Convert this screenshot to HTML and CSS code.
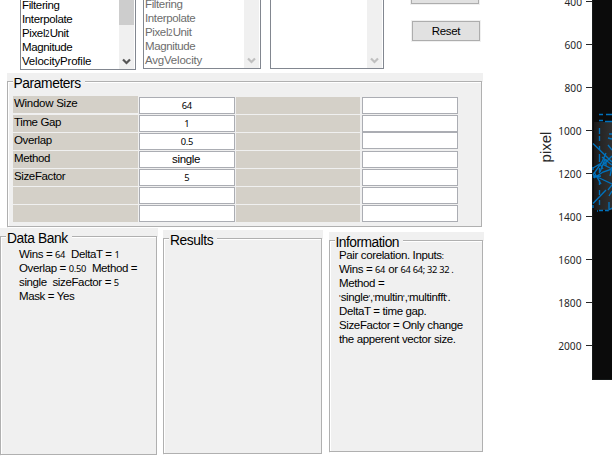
FILE: index.html
```html
<!DOCTYPE html>
<html lang="en">
<head>
<meta charset="utf-8">
<title>Vector analysis</title>
<link rel="stylesheet" href="styles.css">
</head>
<body>
<div class="app">
  <main class="controls">
    <section class="lists">
      <div class="listbox first">
        <ul><li>Filtering</li><li>Interpolate</li><li>Pixel<i class="small">2</i>Unit</li><li>Magnitude</li><li class="wide">VelocityProfile</li></ul>
        <div class="scroll"><div class="thumb"></div><svg width="15" height="12" viewBox="0 0 15 12"><path d="M4 2.5 7.5 6 11 2.5"/></svg></div>
      </div>
      <div class="listbox second off">
        <ul><li>Filtering</li><li>Interpolate</li><li>Pixel<i class="small">2</i>Unit</li><li>Magnitude</li><li class="wide">AvgVelocity</li></ul>
        <div class="scroll"><svg width="15" height="12" viewBox="0 0 15 12"><path d="M4 2.5 7.5 6 11 2.5"/></svg></div>
      </div>
      <div class="listbox third off">
        <div class="scroll"><svg width="15" height="12" viewBox="0 0 15 12"><path d="M4 2.5 7.5 6 11 2.5"/></svg></div>
      </div>
      <div class="buttons"><button class="cut"></button><button>Reset</button></div>
    </section>

    <section class="panel params">
      <h2>Parameters</h2>
      <div class="frame">
        <div class="col labels">
          <span>Window Size</span><span>Time Gap</span><span>Overlap</span><span>Method</span><span>SizeFactor</span><span></span><span></span>
        </div>
        <div class="col fields">
          <span><i>64</i></span><span><i>1</i></span><span><i>0.5</i></span><span class="word">single</span><span><i>5</i></span><span></span><span></span>
        </div>
        <div class="col blanks"><span></span><span></span><span></span><span></span><span></span><span></span><span></span></div>
        <div class="col fields extra"><span></span><span></span><span class="raised"></span><span></span><span></span><span></span><span></span></div>
      </div>
    </section>

    <section class="bottom">
      <div class="panel bank">
        <h2>Data Bank</h2>
        <div class="frame">
          <p>Wins = <i>64</i>&nbsp; DeltaT = <i>1</i></p><p>Overlap = <i>0.50</i>&nbsp; Method =</p><p>single&nbsp; sizeFactor = <i>5</i></p><p>Mask = Yes</p>
        </div>
      </div>
      <div class="panel results">
        <h2>Results</h2>
        <div class="frame"></div>
      </div>
      <div class="panel info">
        <h2>Information</h2>
        <div class="frame">
          <p>Pair corelation. Inputs<i class="small">:</i></p><p>Wins = <i>64</i> or <i>64 64; 32 32 .</i></p><p>Method =</p><p><b>'</b>single<b>'</b>,<b>'</b>multin<b>'</b>,<b>'</b>multinfft<b>'</b>.</p><p>DeltaT = time gap.</p><p>SizeFactor = Only change</p><p>the apperent vector size.</p>
        </div>
      </div>
    </section>
  </main>

  <aside class="chart">
    <svg width="80" height="456" viewBox="0 0 80 456">
      <defs><linearGradient id="flow" x1="0" x2="1"><stop offset="0" stop-color="#171717"/><stop offset=".4" stop-color="#262626"/><stop offset="1" stop-color="#303030"/></linearGradient></defs>
      <rect x="60" y="0" width="20" height="380" fill="#0b0b0b"/>
      <rect x="62" y="122" width="18" height="88" fill="url(#flow)"/>
      <path class="edge" d="M60.5 0V379.5H80"/>
      <path class="ticks" d="M54 1.5h6M54 44.5h6M54 87.5h6M54 130.5h6M54 173.5h6M54 216.5h6M54 259.5h6M54 302.5h6M54 345.5h6"/>
      <g class="tick">
        <text x="50" y="6">400</text><text x="50" y="49">600</text><text x="50" y="92">800</text><text x="49.5" y="135">1000</text><text x="49.5" y="178">1200</text><text x="49.5" y="221">1400</text><text x="49.5" y="264">1600</text><text x="49.5" y="307">1800</text><text x="49.5" y="350">2000</text>
      </g>
      <text class="axis" transform="translate(19 147) rotate(-90)">pixel</text>
      <g class="vectors">
        <path d="M67 114.500h4M74 114.500h6M67 120.500h4M73 121.500h7"/>
        <path d="M67.500 128v6M67.500 136v5M67.500 146v4M67.500 154v8M67.500 168v5M67.500 180v5M67.500 190v5M67.500 200v5"/>
        <path d="M61 143.500 80 162M61 203.500 74 190M61 175 70 162 74 153M61 175 80 184M62 172l7 12M62 178l9-6 9-3M61 168l7-4 3 5M68 172l5-13M70 157l10 8M76 145l4 5M77 134h3M76 138l4 1M72 165l8 4M61 177l8-1M76 190l4-5M77 196l3-5M74 159v7M71 165l9-9M61 167v3M61 205v3M78 176l2-9"/>
        <path d="M67 210.500h4M73 210.500h4M75 211l5-3M65 211h1M77 202v7"/>
      </g>
    </svg>
  </aside>
</div>
</body>
</html>
```
FILE: styles.css
```css
* { box-sizing: border-box; }
body { margin: 0; background: #fff; color: #000; font: 11.5px/14px "Liberation Sans", Arial, sans-serif; letter-spacing: -0.37px; overflow: hidden; }
h2, p, ul { margin: 0; padding: 0; }
ul { list-style: none; }
i { font: 9.3px/1 "Noto Sans", sans-serif; letter-spacing: -0.3px; margin-right: 0.3px; }
i.small { font-size: 8px; }
.app { display: flex; width: 612px; height: 456px; }
.controls { width: 484px; height: 456px; flex: none; }
.chart { width: 80px; margin-left: 48px; flex: none; letter-spacing: 0; }
.chart svg { display: block; }

.lists { display: flex; align-items: flex-start; height: 73px; padding-left: 20px; }
.listbox { display: flex; justify-content: space-between; border: 1px solid #828790; border-top: 0; background: #fff; overflow: hidden; }
.listbox li { height: 14px; white-space: nowrap; }
.listbox .wide { letter-spacing: -0.2px; }
.first { width: 116px; height: 70px; padding: 0 1px; }
.first ul { margin-top: -2px; }
.second { width: 118px; height: 69px; margin-left: 7px; padding: 0 1px; }
.second ul { margin-top: -3px; }
.third { width: 114px; height: 69px; margin-left: 9px; padding-right: 1px; justify-content: flex-end; }
.off { color: #6d6d6d; }
.scroll { display: flex; flex-direction: column; justify-content: flex-end; width: 15px; height: 100%; padding-bottom: 0; background: #f0f0f0; }
.thumb { height: 25px; margin-bottom: auto; background: #cdcdcd; }
.scroll path { fill: none; stroke: #555; stroke-width: 2.2; }
.off .scroll path { stroke: #bfbfbf; }
.buttons { display: flex; flex-direction: column; gap: 17px; margin-left: 27px; }
button { width: 68px; height: 20px; margin: 0 0 0 1px; padding: 0 0 1px; border: 1px solid #adadad; outline: 1px solid #f0f0f0; background: #e1e1e1; color: #000; font: 11.5px/18px "Liberation Sans", Arial, sans-serif; letter-spacing: -0.3px; }
button.cut { height: 4px; margin-left: 0; border-top: 0; padding: 0; }

.panel { display: flex; flex-direction: column; background: #f0f0f0; }
.panel h2 { align-self: flex-start; position: relative; z-index: 1; height: 16px; padding: 0 4px 0 1px; background: #f0f0f0; font-size: 13.8px; font-weight: 400; line-height: 17px; letter-spacing: -0.4px; white-space: nowrap; }
.frame { flex: 1; margin-top: -8px; border: 1px solid #b0b0b0; box-shadow: inset 1px 1px #fff, 1px 1px #fff; }

.params { width: 476px; height: 155px; margin-left: 7px; padding-right: 1px; padding-bottom: 1px; }
.params h2 { margin: 2px 0 -2px 5.5px; }
.params .frame { display: flex; padding: 15px 0 0 5px; }
.col { display: flex; flex-direction: column; gap: 1px; flex: none; }
.col span { display: block; height: 17px; }
.labels { width: 125px; }
.labels span, .blanks span { padding-left: 1px; background: #d4d0c8; line-height: 15px; }
.labels span:first-child { margin: -1px 0 1px; letter-spacing: -0.27px; }
.blanks { width: 124px; margin-left: 1px; }
.fields { width: 96px; margin-left: 1px; }
.fields span { border: 1px solid #abadb3; background: #fff; text-align: center; line-height: 15px; }
.extra { margin-left: 2px; }
.fields .raised { margin: -1px 0 1px; }
.fields .word { padding-right: 2px; }

.bottom { display: flex; align-items: flex-start; height: 228px; }
.bottom .panel { padding-right: 1px; padding-bottom: 1px; flex: none; }
.bank { width: 158px; height: 228px; }
.results { width: 160px; height: 225px; margin: 2px 0 0 5px; }
.info { width: 155px; height: 221px; margin: 4px 0 0 6px; }
.bank h2, .results h2, .info h2 { margin: 2px 0 -2px 6px; }
.info h2 { letter-spacing: -0.5px; margin-left: 5.5px; }
.bank .frame { padding: 10px 0 0 18px; }
.info .frame { padding: 7px 0 0 9px; }
.frame p { height: 14px; white-space: nowrap; }
.frame b { font: 8.5px/1 "Liberation Sans", Arial, sans-serif; letter-spacing: 0; color: #222; }

.edge { fill: none; stroke: #171a1a; }
.ticks { stroke: #262626; stroke-width: 1; }
.tick text { font: 10.2px "Noto Sans", sans-serif; fill: #262626; text-anchor: end; }
.axis { font: 15px "Liberation Sans", Arial, sans-serif; fill: #262626; text-anchor: middle; }
.vectors { fill: none; stroke: #0072bd; stroke-width: 1.35; }
```
